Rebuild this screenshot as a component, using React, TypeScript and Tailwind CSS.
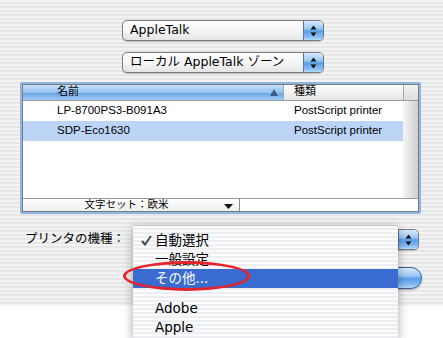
import type { ReactNode } from "react";

const stripes =
  "bg-[image:repeating-linear-gradient(to_bottom,#f3f3f3_0px,#f3f3f3_2px,#e7e7e7_2px,#e7e7e7_4px)]";
const menuStripes =
  "bg-[image:repeating-linear-gradient(to_bottom,#fbfbfc_0px,#fbfbfc_2px,#eceef2_2px,#eceef2_4px)]";
const aqua =
  "bg-[image:linear-gradient(to_bottom,#d6e9fd_0%,#9cc8f5_40%,#5d9ee9_52%,#7fb7f1_80%,#b4dafc_100%)]";

function Arrows() {
  return (
    <svg width="7" height="12" viewBox="0 0 7 12">
      <path d="M3.5 0.5 L6.5 4.5 H0.5 Z" fill="#111" />
      <path d="M0.5 7.5 H6.5 L3.5 11.5 Z" fill="#111" />
    </svg>
  );
}

function Popup({ label, className }: { label?: ReactNode; className: string }) {
  return (
    <div
      className={`flex h-[21px] rounded-[5px] border border-[#7b7b7b] shadow-[0_1px_1px_rgba(0,0,0,0.2)] overflow-hidden bg-[image:linear-gradient(to_bottom,#ffffff_0%,#f6f6f6_50%,#e4e4e4_100%)] ${className}`}
    >
      <div className="flex-1 pl-[7px] flex items-center text-[12.5px] whitespace-nowrap">
        {label}
      </div>
      <div className={`w-[20px] border-l border-[#4f78b4] flex items-center justify-center ${aqua}`}>
        <Arrows />
      </div>
    </div>
  );
}

function PrinterTable() {
  const rows = [
    { name: "LP-8700PS3-B091A3", kind: "PostScript printer", sel: false },
    { name: "SDP-Eco1630", kind: "PostScript printer", sel: true },
  ];

  return (
    <div className="ml-[20px] mt-[9px] w-[401px] h-[132px] border-2 border-[#8fb6e6] rounded-[2px]">
      <div className="h-full border border-[#7c7c7c] flex flex-col bg-white">
        {/* header */}
        <div className="h-[16px] flex text-[11px] border-b border-[#9a9a9a]">
          <div className="w-[260px] flex items-center pl-[34px] pr-[5px] bg-[image:linear-gradient(to_bottom,#c6e0fb_0%,#94c2f2_50%,#6ea6e6_55%,#9fcaf5_100%)]">
            <span className="flex-1">名前</span>
            <svg width="8" height="7" viewBox="0 0 8 7">
              <path d="M4 0 L8 7 H0 Z" fill="#3f5c88" />
            </svg>
          </div>
          <div className="w-[120px] flex items-center pl-[10px] border-l border-[#a8a8a8] bg-[image:linear-gradient(to_bottom,#ffffff_0%,#f3f3f3_50%,#e6e6e6_100%)]">
            種類
          </div>
          <div className="flex-1 border-l border-[#a8a8a8] bg-[image:linear-gradient(to_bottom,#f3f3f3_0%,#dedede_100%)]" />
        </div>

        {/* body */}
        <div className="flex-1 flex">
          <div className="flex-1 font-['Liberation_Sans',sans-serif] text-[11.5px]">
            {rows.map((r) => (
              <div
                key={r.name}
                className={`h-[20px] flex items-center ${r.sel ? "bg-[#bcd5f6]" : "bg-white"}`}
              >
                <span className="w-[271px] pl-[34px]">{r.name}</span>
                <span>{r.kind}</span>
              </div>
            ))}
          </div>
          <div className="w-[15px] bg-[image:linear-gradient(to_right,#f6f6f6_0%,#e2e2e2_50%,#cfcfcf_100%)]" />
        </div>

        {/* footer */}
        <div className="h-[13px] flex border-t border-[#9a9a9a]">
          <div className="w-[217px] flex items-center border-r border-[#8a8a8a] bg-[image:linear-gradient(to_bottom,#ffffff_0%,#eeeeee_100%)] text-[10.5px]">
            <span className="flex-1 text-center pl-[6px]">文字セット：欧米</span>
            <svg width="9" height="5" viewBox="0 0 9 5" className="mr-[6px] mt-[2px]">
              <path d="M0 0 H9 L4.5 5 Z" fill="#111" />
            </svg>
          </div>
          <div className="flex-1 bg-white" />
        </div>
      </div>
    </div>
  );
}

function MenuItem({ children, check, selected }: { children: ReactNode; check?: boolean; selected?: boolean }) {
  return (
    <div
      className={`h-[19px] flex items-center text-[13.5px] ${selected ? "bg-[#3a6cd0] text-white" : ""}`}
    >
      <span className="w-[22px] pl-[8px] flex items-center">
        {check && (
          <svg width="11" height="11" viewBox="0 0 11 11">
            <path d="M1 6 L4 9.5 L10 1" fill="none" stroke="#4a4a4a" strokeWidth="2" />
          </svg>
        )}
      </span>
      <span>{children}</span>
    </div>
  );
}

export default function App() {
  return (
    <div className="w-[443px] h-[338px] relative overflow-hidden bg-white text-black font-['DejaVu_Sans','Noto_Sans_CJK_JP',sans-serif]">
      <div className={`h-[306px] pt-[20px] ${stripes}`}>
        <Popup label="AppleTalk" className="ml-[122px] w-[202px]" />
        <Popup label="ローカル AppleTalk ゾーン" className="ml-[122px] w-[202px] mt-[11px]" />

        <PrinterTable />

        <div className="flex items-center mt-[15px]">
          <span className="w-[133px] pl-[25px] text-[12.5px] whitespace-nowrap">プリンタの機種：</span>
          {/* label of this popup is hidden under the open menu */}
          <Popup className="w-[286px]" />
        </div>

        <div className="flex justify-end pr-[21px] mt-[17px]">
          <div className={`w-[90px] h-[22px] rounded-full border border-[#3c5f9a] shadow-[0_1px_2px_rgba(0,0,0,0.3)] ${aqua}`} />
        </div>
      </div>

      {/* open popup menu */}
      <div
        className={`absolute left-[133px] top-[225px] w-[265px] h-[113px] pt-[5px] shadow-[0_3px_10px_rgba(0,0,0,0.35)] border-t border-[#c8c8c8] ${menuStripes}`}
      >
        <MenuItem check>自動選択</MenuItem>
        <MenuItem>一般設定</MenuItem>
        <MenuItem selected>その他...</MenuItem>
        <div className="h-[11px]" />
        <MenuItem>Adobe</MenuItem>
        <MenuItem>Apple</MenuItem>
      </div>

      {/* red highlight */}
      <div className="absolute left-[123px] top-[261px] w-[127px] h-[30px] rounded-[50%] border-[3px] border-[#e3242b]" />
    </div>
  );
}
